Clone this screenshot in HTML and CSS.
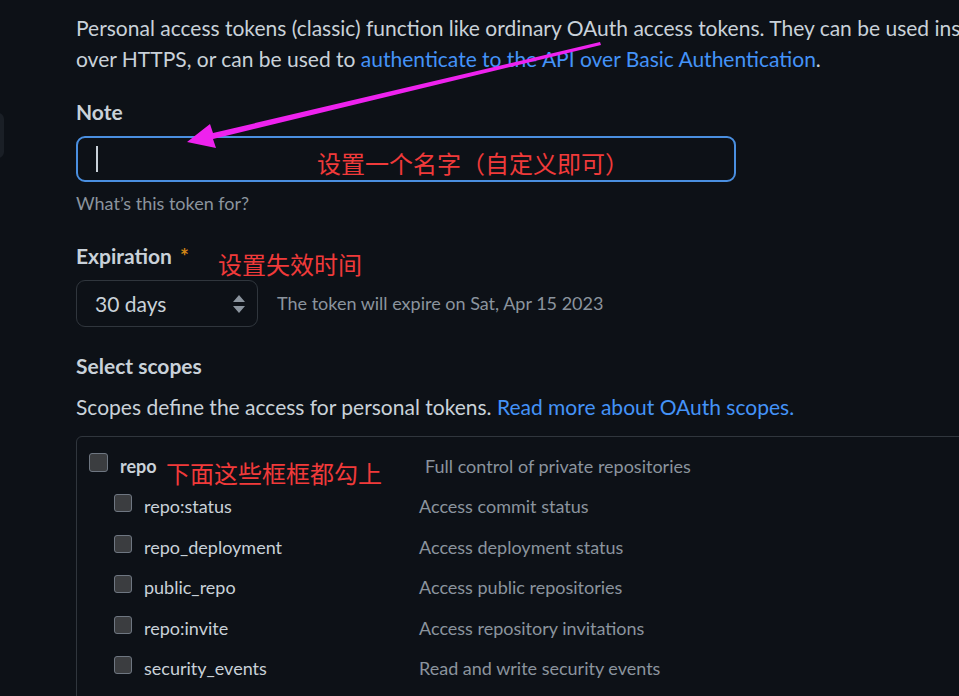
FILE: index.html
```html
<!DOCTYPE html>
<html lang="en">
<head>
<meta charset="utf-8">
<title>New personal access token (classic)</title>
<link rel="stylesheet" href="styles.css">
</head>
<body>
<div class="page">
  <aside class="sidebar"><div class="nav-item"></div></aside>
  <main class="main">
    <p class="intro">Personal access tokens (classic) function like ordinary OAuth access tokens. They can be used instead of a password for Git<br>over HTTPS, or can be used to <a href="#">authenticate to the API over Basic Authentication</a>.</p>

    <div class="group group-note">
      <label class="label">Note</label>
      <div class="field-wrap">
        <div class="text-input focused"><span class="caret"></span></div>
        <span class="note-cn note-name">设置一个名字（自定义即可）</span>
      </div>
      <p class="hint">What’s this token for?</p>
    </div>

    <div class="group group-exp">
      <div class="label-row">
        <label class="label">Expiration</label><span class="req">*</span>
        <span class="note-cn note-exp">设置失效时间</span>
      </div>
      <div class="exp-row">
        <div class="select">
          <span>30 days</span>
          <svg class="updown" width="12" height="18" viewBox="0 0 12 18"><path d="M6 0 L12 7 L0 7 Z M0 11 L12 11 L6 18 Z" fill="#8b949e"/></svg>
        </div>
        <span class="exp-text">The token will expire on Sat, Apr 15 2023</span>
      </div>
    </div>

    <div class="group group-scopes">
      <h3 class="label">Select scopes</h3>
      <p class="scopes-desc">Scopes define the access for personal tokens. <a href="#">Read more about OAuth scopes.</a></p>
      <div class="scope-box">
        <div class="scope-row main-row">
          <span class="cb"></span>
          <span class="scope-name strong">repo<span class="note-cn note-boxes">下面这些框框都勾上</span></span>
          <span class="scope-desc">Full control of private repositories</span>
        </div>
        <div class="scope-row sub-row">
          <span class="cb"></span>
          <span class="scope-name">repo:status</span>
          <span class="scope-desc">Access commit status</span>
        </div>
        <div class="scope-row sub-row">
          <span class="cb"></span>
          <span class="scope-name">repo_deployment</span>
          <span class="scope-desc">Access deployment status</span>
        </div>
        <div class="scope-row sub-row">
          <span class="cb"></span>
          <span class="scope-name">public_repo</span>
          <span class="scope-desc">Access public repositories</span>
        </div>
        <div class="scope-row sub-row">
          <span class="cb"></span>
          <span class="scope-name">repo:invite</span>
          <span class="scope-desc">Access repository invitations</span>
        </div>
        <div class="scope-row sub-row">
          <span class="cb"></span>
          <span class="scope-name">security_events</span>
          <span class="scope-desc">Read and write security events</span>
        </div>
      </div>
    </div>
  </main>
  <svg class="arrow" width="959" height="696" viewBox="0 0 959 696">
    <polygon points="600,42 213,133 210,124 187,142 216,148 213,139 601,45" fill="#ee22ee"/>
  </svg>
</div>
</body>
</html>
```
FILE: styles.css
```css
html, body {
  margin: 0;
  padding: 0;
  background: #0d1117;
  overflow: hidden;
}
body {
  width: 959px;
  height: 696px;
  font-family: Lato, "Noto Sans", sans-serif;
  color: #c9d1d9;
}
.page {
  position: relative;
  display: flex;
  width: 959px;
  height: 696px;
  overflow: hidden;
}
.sidebar {
  width: 4px;
  flex: none;
  overflow: hidden;
}
.nav-item {
  width: 200px;
  height: 45px;
  margin-top: 113px;
  margin-left: -196px;
  border-radius: 6px;
  background: #1a1f26;
}
.main {
  flex: none;
  width: 1200px;
  padding-left: 72px;
}
a {
  color: #4493f8;
  text-decoration: none;
}
.intro {
  margin: 12px 0 0;
  font-size: 21px;
  line-height: 31px;
  white-space: nowrap;
}
.group-note {
  margin-top: 23px;
}
.label {
  display: block;
  margin: 0;
  font-size: 21px;
  line-height: 30px;
  font-weight: 700;
  color: #c9d1d9;
}
.field-wrap {
  position: relative;
  margin-top: 9px;
  width: 660px;
}
.text-input {
  height: 42px;
  border: 2px solid #4a8fe0;
  border-radius: 9px;
  display: flex;
  align-items: center;
  padding-left: 18px;
}
.caret {
  width: 2px;
  height: 26px;
  background: #c9d1d9;
}
.note-cn {
  font-family: "Noto Sans CJK SC", sans-serif;
  color: #f03a3a;
  font-size: 24px;
  line-height: 28px;
  font-weight: 400;
  white-space: nowrap;
}
.note-name {
  position: absolute;
  left: 241px;
  top: 13px;
}
.hint {
  margin: 8px 0 0;
  font-size: 18px;
  line-height: 26px;
  color: #8b949e;
}
.group-exp {
  margin-top: 25px;
}
.label-row {
  position: relative;
  display: flex;
  align-items: flex-start;
}
.req {
  color: #d18616;
  font-size: 21px;
  line-height: 24px;
  font-weight: 700;
  margin-left: 8px;
  margin-top: 3px;
}
.note-exp {
  position: absolute;
  left: 142px;
  top: 9px;
}
.exp-row {
  display: flex;
  align-items: center;
  margin-top: 9px;
}
.select {
  border: 1px solid #30363d;
  border-radius: 9px;
  display: flex;
  align-items: center;
  justify-content: space-between;
  padding: 0 12px 0 18px;
  box-sizing: border-box;
  width: 182px;
  height: 47px;
  font-size: 21px;
}
.updown {
  display: block;
}
.exp-text {
  margin-left: 19px;
  margin-top: -2px;
  font-size: 18px;
  color: #8b949e;
}
.group-scopes {
  margin-top: 24px;
}
.scopes-desc {
  margin: 10px 0 0;
  font-size: 21px;
  line-height: 31px;
}
.scope-box {
  margin-top: 14px;
  width: 1000px;
  height: 400px;
  border: 1px solid #30363d;
  border-radius: 6px;
  padding-top: 14px;
}
.scope-row {
  display: flex;
  align-items: center;
  height: 40.5px;
}
.main-row {
  padding-left: 12px;
  height: 30px;
  margin-bottom: 5px;
}
.sub-row {
  padding-left: 37px;
}
.cb {
  flex: none;
  box-sizing: border-box;
  width: 18px;
  height: 18px;
  border: 1px solid #6e7681;
  background: #3b3d40;
  border-radius: 3px;
  margin-top: -6px;
}
.main-row .cb {
  width: 19px;
  height: 19px;
  margin-top: -8px;
}
.scope-name {
  position: relative;
  margin-left: 12px;
  width: 275px;
  flex: none;
  font-size: 18px;
  color: #c9d1d9;
}
.main-row .scope-name {
  width: 305px;
}
.strong {
  font-weight: 700;
}
.note-boxes {
  position: absolute;
  left: 46px;
  top: 4px;
}
.scope-desc {
  font-size: 18px;
  color: #8b949e;
}
.arrow {
  position: absolute;
  left: 0;
  top: 0;
  pointer-events: none;
}
```
